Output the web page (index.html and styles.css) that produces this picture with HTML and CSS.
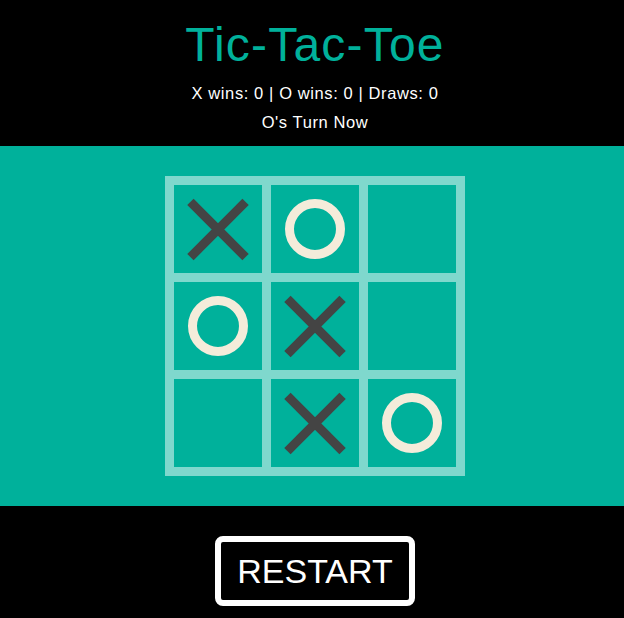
FILE: index.html
```html
<!DOCTYPE html>
<html>
<head>
<meta charset="utf-8">
<link rel="stylesheet" href="styles.css">
</head>
<body>
<header class="top">
  <h1 class="title">Tic-Tac-Toe</h1>
  <p class="score">X wins: 0 | O wins: 0 | Draws: 0</p>
  <p class="turn">O's Turn Now</p>
</header>
<main class="band">
  <div class="board">
    <div class="cell"><span class="x"></span></div>
    <div class="cell"><span class="o"></span></div>
    <div class="cell"></div>
    <div class="cell"><span class="o"></span></div>
    <div class="cell"><span class="x"></span></div>
    <div class="cell"></div>
    <div class="cell"></div>
    <div class="cell"><span class="x"></span></div>
    <div class="cell"><span class="o"></span></div>
  </div>
</main>
<footer class="bottom">
  <button class="restart">RESTART</button>
</footer>
</body>
</html>
```
FILE: styles.css
```css
html, body {
  margin: 0;
  padding: 0;
  background: #000;
  font-family: "Liberation Sans", Arial, sans-serif;
  color: #fff;
}
.top {
  height: 146px;
  text-align: center;
  padding: 17px 0 0 6px;
  box-sizing: border-box;
}
.title {
  margin: 0;
  font-size: 48px;
  line-height: 56px;
  font-weight: normal;
  letter-spacing: 1.2px;
  color: #00b19b;
}
.score {
  margin: 10px 0 0;
  font-size: 16.5px;
  line-height: 20px;
  letter-spacing: 0.6px;
}
.turn {
  margin: 9px 0 0;
  font-size: 16.5px;
  line-height: 20px;
  letter-spacing: 0.6px;
}
.band {
  background: #00b19b;
  height: 360px;
  padding-left: 6px;
  box-sizing: border-box;
  display: flex;
  justify-content: center;
  align-items: center;
}
.board {
  display: grid;
  grid-template-columns: repeat(3, 88px);
  grid-template-rows: repeat(3, 88px);
  gap: 9px;
  padding: 9px;
  background: #7fd8cd;
}
.cell {
  background: #00b19b;
  display: flex;
  align-items: center;
  justify-content: center;
}
.x {
  position: relative;
  width: 60px;
  height: 60px;
}
.x::before, .x::after {
  content: "";
  position: absolute;
  left: 50%;
  top: 50%;
  width: 78px;
  height: 9px;
  margin-left: -39px;
  margin-top: -4.5px;
  background: #444;
  transform: rotate(45deg);
}
.x::after {
  transform: rotate(-45deg);
}
.o {
  width: 60px;
  height: 60px;
  box-sizing: border-box;
  border: 9px solid #f4ecda;
  border-radius: 50%;
}
.bottom {
  display: flex;
  justify-content: center;
  padding: 30px 0 0 6px;
}
.restart {
  width: 200px;
  height: 70px;
  background: #000;
  color: #fff;
  border: 6px solid #fff;
  border-radius: 8px;
  font-family: "Liberation Sans", Arial, sans-serif;
  font-size: 34px;
  padding: 0;
}
```
